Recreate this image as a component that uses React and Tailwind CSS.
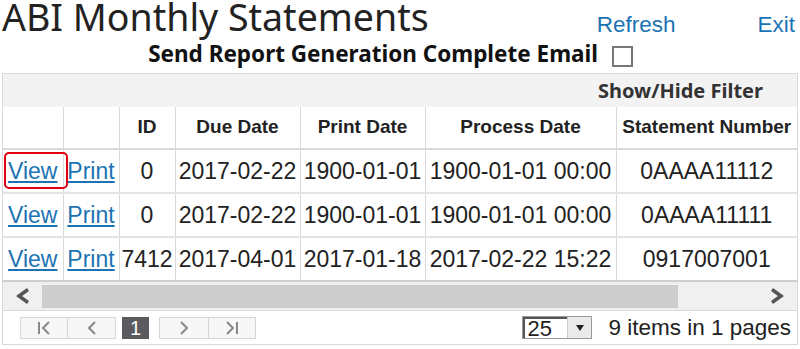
const rows = [
  { id: "0", due: "2017-02-22", print: "1900-01-01", process: "1900-01-01 00:00", number: "0AAAA11112", mark: true },
  { id: "0", due: "2017-02-22", print: "1900-01-01", process: "1900-01-01 00:00", number: "0AAAA11111" },
  { id: "7412", due: "2017-04-01", print: "2017-01-18", process: "2017-02-22 15:22", number: "0917007001" },
];

const sans = { fontFamily: '"Noto Sans", "Open Sans", sans-serif' };
const arial = { fontFamily: '"Liberation Sans", Arial, sans-serif' };

function PagerButton({ children, className = "" }) {
  return (
    <div className={`flex items-center justify-center h-[22px] bg-[#f7f7f7] border border-[#d6d6d6] text-[#777] ${className}`}>
      {children}
    </div>
  );
}

export default function App() {
  return (
    <div className="w-[800px] h-[349px] bg-white text-[#222] overflow-hidden relative">
      {/* Header */}
      <div className="flex items-start h-[42px]">
        <h1 className="text-[37.5px] leading-[34px] pl-[2px] text-[#222] font-normal whitespace-nowrap" style={sans}>
          ABI Monthly Statements
        </h1>
        <div className="ml-auto flex gap-[82px] pt-[13px] pr-[5px] text-[22.5px] leading-[24px] text-[#1c73b3]" style={arial}>
          <span>Refresh</span>
          <span>Exit</span>
        </div>
      </div>
      <div className="flex items-start justify-end pr-[167px] h-[31px]">
        <span className="text-[22.5px] leading-[28px] -mt-[2px] font-bold text-[#111] mr-[14px] whitespace-nowrap" style={sans}>
          Send Report Generation Complete Email
        </span>
        <span className="mt-[4px] w-[21px] h-[21px] border-2 border-[#777] bg-white" />
      </div>

      {/* Grid */}
      <div className="mx-[2px] border border-[#d9d9d9] w-[796px]" style={arial}>
        <div className="h-[33px] bg-[#f3f3f3] flex items-center justify-end pr-[34px]">
          <span className="text-[20px] font-bold text-[#333]" style={sans}>Show/Hide Filter</span>
        </div>
        <table className="border-collapse table-fixed w-[794px]">
          <colgroup>
            <col className="w-[60px]" />
            <col className="w-[56px]" />
            <col className="w-[56px]" />
            <col className="w-[125px]" />
            <col className="w-[125px]" />
            <col className="w-[191px]" />
            <col className="w-[181px]" />
          </colgroup>
          <thead>
            <tr className="h-[42px] text-[19px] font-bold text-[#222]">
              <th className="border-r border-b-2 border-[#d9d9d9]"></th>
              <th className="border-r border-b-2 border-[#d9d9d9]"></th>
              <th className="border-r border-b-2 border-[#d9d9d9]">ID</th>
              <th className="border-r border-b-2 border-[#d9d9d9]">Due Date</th>
              <th className="border-r border-b-2 border-[#d9d9d9]">Print Date</th>
              <th className="border-r border-b-2 border-[#d9d9d9]">Process Date</th>
              <th className="border-b-2 border-[#d9d9d9] whitespace-nowrap">Statement Number</th>
            </tr>
          </thead>
          <tbody>
            {rows.map((r, i) => (
              <tr key={i} className={`h-[44px] text-[23px] text-center whitespace-nowrap ${i === 2 ? "border-b-2 border-[#cfcfcf]" : "border-b-2 border-[#e4e4e4]"}`}>
                <td className="border-r border-[#d9d9d9] relative">
                  <span className="underline text-[#1c73b3]">View</span>
                  {r.mark && (
                    <span className="absolute left-[1px] top-[2px] w-[64px] h-[37px] border-2 border-[#e0000f] rounded-[5px]" />
                  )}
                </td>
                <td className="border-r border-[#d9d9d9]">
                  <span className="underline text-[#1c73b3]">Print</span>
                </td>
                <td className="border-r border-[#d9d9d9]">{r.id}</td>
                <td className="border-r border-[#d9d9d9]">{r.due}</td>
                <td className="border-r border-[#d9d9d9]">{r.print}</td>
                <td className="border-r border-[#d9d9d9]">{r.process}</td>
                <td>{r.number}</td>
              </tr>
            ))}
          </tbody>
        </table>

        {/* Horizontal scrollbar */}
        <div className="h-[28px] bg-[#f0f0f0] flex items-center">
          <div className="w-[39px] flex justify-center">
            <svg width="16" height="16" viewBox="0 0 16 16">
              <path d="M13 1.5 L4 8 L13 14.5" fill="none" stroke="#555" strokeWidth="3.5" />
            </svg>
          </div>
          <div className="w-[636px] h-[23px] bg-[#cdcdcd]" />
          <div className="flex-1 flex justify-end pr-[12px]">
            <svg width="16" height="16" viewBox="0 0 16 16">
              <path d="M3 1.5 L12 8 L3 14.5" fill="none" stroke="#555" strokeWidth="3.5" />
            </svg>
          </div>
        </div>

        {/* Pager */}
        <div className="h-[34px] border-t border-[#d9d9d9] flex items-center pl-[17px] pr-[6px]">
          <div className="flex">
            <PagerButton className="w-[48px]">
              <svg width="16" height="16" viewBox="0 0 16 16">
                <path d="M3 2 V14 M13 2 L7 8 L13 14" fill="none" stroke="#888" strokeWidth="2" />
              </svg>
            </PagerButton>
            <PagerButton className="w-[48px] border-l-0">
              <svg width="12" height="16" viewBox="0 0 12 16">
                <path d="M9 2 L3 8 L9 14" fill="none" stroke="#888" strokeWidth="2" />
              </svg>
            </PagerButton>
          </div>
          <div className="ml-[6px] w-[27px] h-[22px] bg-[#5a5a5f] text-white text-[20px] leading-[22px] text-center">1</div>
          <div className="flex ml-[10px]">
            <PagerButton className="w-[50px]">
              <svg width="12" height="16" viewBox="0 0 12 16">
                <path d="M3 2 L9 8 L3 14" fill="none" stroke="#888" strokeWidth="2" />
              </svg>
            </PagerButton>
            <PagerButton className="w-[47px] border-l-0">
              <svg width="16" height="16" viewBox="0 0 16 16">
                <path d="M3 2 L9 8 L3 14 M13 2 V14" fill="none" stroke="#888" strokeWidth="2" />
              </svg>
            </PagerButton>
          </div>
          <div className="ml-auto flex items-center">
            <div className="flex h-[23px] border border-[#999]">
              <div className="w-[44px] bg-white border-t-2 border-l-2 border-[#555] text-[22px] leading-[19px] pl-[2px]">25</div>
              <div className="w-[24px] bg-[#eaeaea] flex items-center justify-center border-l border-[#ccc]">
                <svg width="8" height="6" viewBox="0 0 8 6">
                  <path d="M0 0 H8 L4 6 Z" fill="#222" />
                </svg>
              </div>
            </div>
            <span className="ml-[16px] text-[22.5px] whitespace-nowrap">9 items in 1 pages</span>
          </div>
        </div>
      </div>
    </div>
  );
}
